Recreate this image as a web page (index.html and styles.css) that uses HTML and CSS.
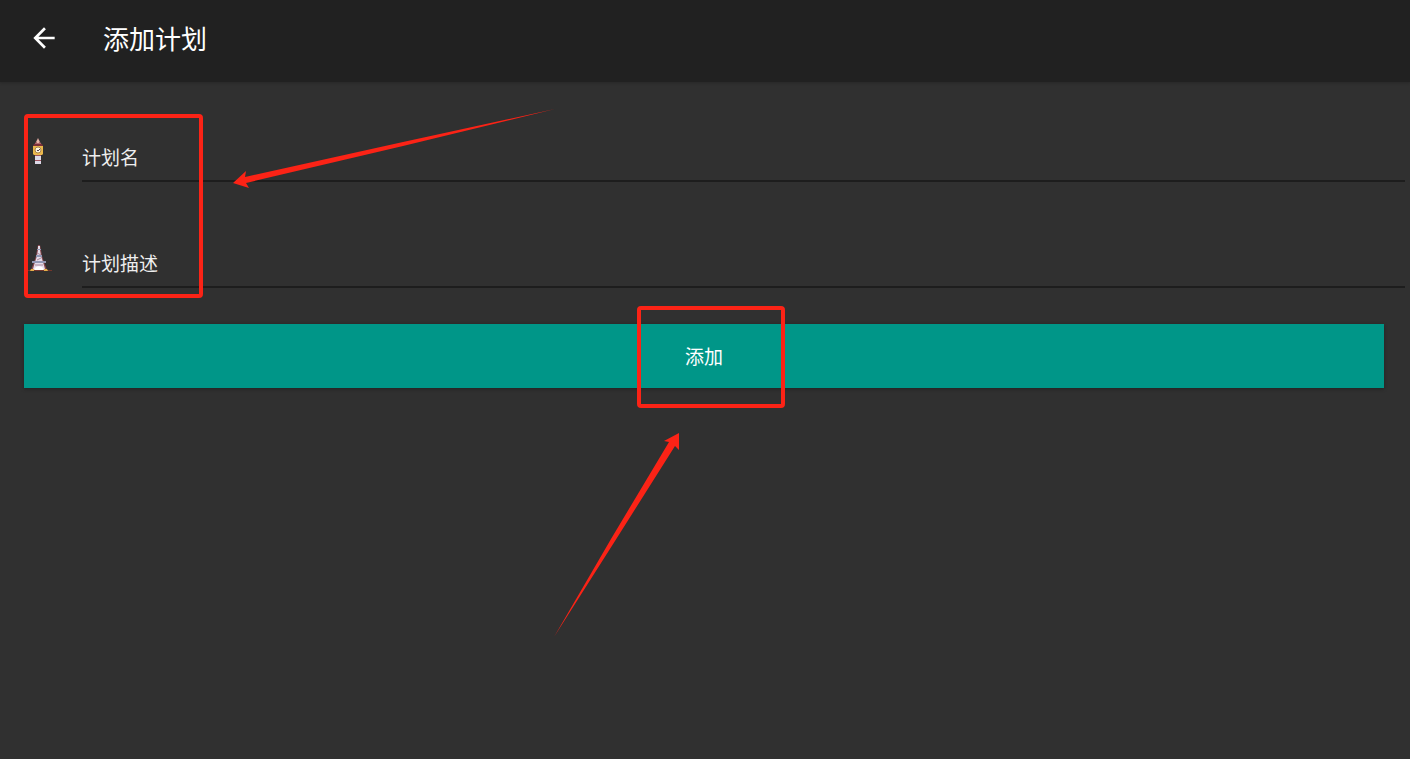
FILE: index.html
```html
<!DOCTYPE html>
<html lang="zh-CN">
    <head>
        <meta charset="utf-8">
        <meta name="viewport" content="width=device-width, initial-scale=1">
        <title>添加计划</title>
        <link rel="stylesheet" href="styles.css">
    </head>
    <body>
    <header class="toolbar">
        <button class="back-button" type="button" aria-label="返回">
            <svg width="32" height="32" viewBox="0 0 24 24" fill="currentColor">
                <path d="M20 11H7.83l5.59-5.59L12 4l-8 8 8 8 1.41-1.41L7.83 13H20v-2z"/>
            </svg>
        </button>
        <h1 class="toolbar-title">添加计划</h1>
    </header>
    <form class="plan-form" action="javascript:void(0);">
        <div class="field">
            <!-- clock tower -->
            <svg class="field-icon" viewBox="0 0 28 28">
                <path d="M10 0l2 4v2H8V4z" fill="#d9a39a"/>
                <path d="M8 4h4l2 3H6z" fill="#b0686c"/>
                <path d="M9 2h2v3H9z" fill="#e3b5aa"/>
                <path d="M6 6h8l1 2H5z" fill="#7d3039"/>
                <path d="M5 8h10v8l-1 1H6l-1-1z" fill="#eab84c"/>
                <circle cx="10" cy="12" r="3" fill="#fff6e0" stroke="#a98450"/>
                <path d="M9 12l1 1 2-2" fill="none" stroke="#514052"/>
                <path d="M7 17h6v9H7z" fill="#dcd9e8"/>
                <path d="M7 17h6v1H7zM7 22h6v1H7z" fill="#a0525e"/>
            </svg>
            <input class="field-input" type="text" name="plan-name" placeholder="计划名" aria-label="计划名">
        </div>
        <div class="field">
            <!-- iron tower -->
            <svg class="field-icon" viewBox="0 0 28 28">
                <path d="M0 26.5h24" stroke="#74352b"/>
                <path d="M10 1h2l1 5 1 6 2 6 3 8H3l3-8 2-6 1-6z" fill="#8b4a50"/>
                <path d="M10 2h2v4l1 6 2 6 2 7H5l2-7 2-6 1-6z" fill="#e4ddea"/>
                <path d="M9 9l4 2M13 14l-4 2" stroke="#b08a98"/>
                <path d="M9 5h4v1H9zM8 11h6v2H8zM4 17h14v2H4z" fill="#9298b4"/>
                <path d="M7 21h8" stroke="#a9889a"/>
                <path d="M6 26c1-5 9-5 10 0z" fill="#fff"/>
                <path d="M3 25h3v2H2zM16 25h3l1 2h-4z" fill="#e4b04a"/>
            </svg>
            <input class="field-input" type="text" name="plan-desc" placeholder="计划描述" aria-label="计划描述">
        </div>
        <button class="submit-button" type="submit">添加</button>
    </form>

    <!-- guide marks over the form -->
    <div class="mark mark-fields"></div>
    <div class="mark mark-submit"></div>
    <svg class="arrow arrow-fields" width="322" height="80" viewBox="0 0 322 80">
        <path d="M0 74L13 62L12 68L170 33L322 0L170 37L13 74L16 79Z"/>
    </svg>
    <svg class="arrow arrow-submit" width="126" height="204" viewBox="0 0 126 204">
        <path d="M125 0L110 8L115 9L57 106L0 204L61 108L121 13L125 17Z"/>
    </svg>
    </body>
</html>
```
FILE: styles.css
```css
* {
    box-sizing: border-box;
}
body {
    position: relative;
    min-height: 100vh;
    margin: 0;
    overflow-x: hidden;
    background-color: #303030;
    color: #fff;
    font-family: "Noto Sans CJK SC", sans-serif;
}
button, input {
    font: inherit;
    color: inherit;
}
.toolbar {
    display: flex;
    align-items: center;
    gap: 43px;
    height: 82px;
    padding: 0 28px 6px;
    background-color: #212121;
    box-shadow: 0 1px 2px #282828;
}
.back-button {
    display: flex;
    padding: 0;
    border: 0;
    background: none;
}
.toolbar-title {
    margin: 0;
    font-size: 26px;
    font-weight: 400;
    line-height: 38px;
}
.plan-form {
    display: flex;
    flex-direction: column;
    gap: 52px;
    padding: 46px 5px 0 28px;
}
.field {
    display: flex;
    align-items: flex-start;
    gap: 26px;
}
.field-icon {
    width: 28px;
    height: 28px;
    margin-top: 10px;
}
.field-input {
    flex: 1;
    min-width: 0;
    height: 54px;
    padding: 4px 0 0;
    border: 0;
    border-bottom: 2px solid #1d1d1d;
    outline: 0;
    background: none;
    font-size: 19px;
}
.field-input::placeholder {
    color: #eee;
    opacity: 1;
}
.submit-button {
    height: 64px;
    margin: -16px 21px 0 -4px;
    padding: 0 0 2px;
    border: 0;
    background-color: #009688;
    box-shadow: 0 1px 3px #222;
    font-size: 19px;
}
.mark {
    position: absolute;
    border: 4px solid #fb2316;
    border-radius: 4px;
    pointer-events: none;
}
.mark-fields {
    top: 114px;
    left: 24px;
    width: 179px;
    height: 184px;
}
.mark-submit {
    top: 306px;
    left: 50%;
    width: 148px;
    height: 102px;
    margin-left: -68px;
}
.arrow {
    position: absolute;
    fill: #fb2316;
    pointer-events: none;
}
.arrow-fields {
    top: 109px;
    left: 233px;
}
.arrow-submit {
    top: 433px;
    left: 50%;
    margin-left: -151px;
}
```
